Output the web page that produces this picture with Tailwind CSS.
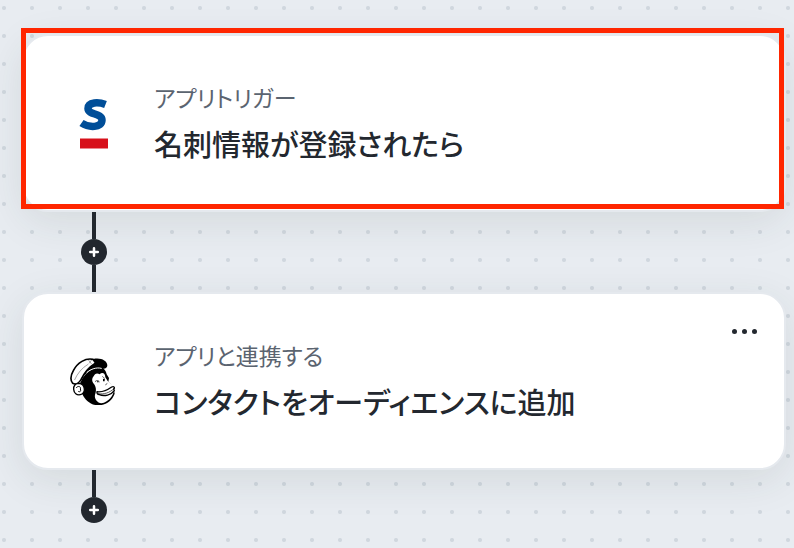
<!DOCTYPE html>
<html lang="ja">
<head>
<meta charset="utf-8">
<meta name="viewport" content="width=device-width, initial-scale=1">
<title>ワークフロー</title>
<script src="https://cdn.jsdelivr.net/npm/@tailwindcss/browser@4"></script>
</head>
<body class="min-h-screen bg-[#e8ecf1] bg-[radial-gradient(circle_at_4px_8px,#d0d7de_1.5px,transparent_2.5px)] bg-[size:28px_28px] font-['Noto_Sans_CJK_JP',sans-serif] [font-feature-settings:'palt']">
<main class="flex flex-col pt-[34px] pl-[22px] pr-2">

  <section class="relative flex h-[178px] items-center gap-9 rounded-[26px] border-2 border-[#e5e9ee] bg-white pl-[46px] shadow-[0_10px_40px_rgba(40,60,50,0.10)]">
    <svg class="size-12 shrink-0 overflow-visible" viewBox="0 0 48 48" role="img" aria-label="Sansan">
      <path fill="none" stroke="#004e98" stroke-width="7.5" d="M35.500 5.500C29 3 18 2.500 18 9.500C18 16 32 14 32 21C32 29 19 29 11.500 24"/>
      <path fill="#d7101a" d="M10 39.500h28v10H10z"/>
    </svg>
    <div class="pb-1">
      <p class="text-[23px] leading-9 text-[#5b6470]">アプリトリガー</p>
      <h2 class="mt-2 text-[29px] leading-10 font-medium text-[#23282f]">名刺情報が登録されたら</h2>
    </div>
    <div class="pointer-events-none absolute -top-2 right-0 bottom-px -left-[3px] border-5 border-[#ff2600]"></div>
  </section>

  <div class="ml-[58px] flex h-20 w-7 flex-col items-center">
    <span class="w-1 flex-1 bg-[#23282f]"></span>
    <button type="button" aria-label="ステップを追加" class="flex size-[26px] items-center justify-center rounded-full bg-[#23282f]">
      <svg class="size-[26px]" viewBox="0 0 26 26" stroke="#fff" stroke-width="2.500" stroke-linecap="round"><path d="M13 9.200v7.600M9.200 13h7.600"/></svg>
    </button>
    <span class="w-1 flex-1 bg-[#23282f]"></span>
  </div>

  <section class="relative flex h-[178px] items-center gap-9 rounded-[26px] border-2 border-[#e5e9ee] bg-white pl-[46px] shadow-[0_10px_40px_rgba(40,60,50,0.10)]">
    <svg class="size-12 shrink-0" viewBox="30 36 144 144" role="img" aria-label="Mailchimp" stroke-linecap="round" stroke-linejoin="round">
      <path fill="#000" d="M62 112C70 92 84 78 112 64C128 65 138 76 140 88L147 99L145 110L160 125L164 146C155 170 135 181 114 181C91 180 75 165 67 147L55 145L53 120Z"/>
      <path fill="#fff" stroke="#000" stroke-width="5" d="M38 115C31 106 32 91 40 77C52 53 77 38 99 43L107 54C91 64 76 77 63 104C57 114 47 120 38 115Z"/>
      <path fill="#000" d="M100 42C121 37 141 46 142 61C142 72 130 74 118 68C99 68 82 77 74 91C74 77 90 62 106 56Z"/>
      <path fill="none" stroke="#777" stroke-width="2" d="M44 104C52 86 66 68 84 58M86 46l8 10M94 46l-6 8"/>
      <path fill="none" stroke="#fff" stroke-width="3" d="M81 82C93 72 109 66 124 70"/>
      <path fill="#fff" d="M101 94C104 85 112 83 119 88C126 81 136 84 136 97L143 108L153 117C161 121 163 127 161 135C162 151 145 172 124 175C113 174 102 161 105 149C110 138 108 124 102 117C95 110 95 100 101 94Z"/>
      <path fill="#fff" stroke="#000" stroke-width="4" d="M57 115C46 115 40 122 41 133C42 145 50 151 61 149C69 148 74 140 73 132C72 122 67 116 57 115Z"/>
      <path fill="none" stroke="#000" stroke-width="3" d="M49 128C55 120 64 126 61 132C64 138 60 142 56 140"/>
      <path fill="#fff" stroke="#000" stroke-width="4" d="M111 140C126 142 141 136 155 126C162 123 166 128 161 132L163 137C154 150 133 155 118 149C112 148 110 144 111 140Z"/>
      <path fill="none" stroke="#000" stroke-width="2" d="M115 146C133 149 148 143 161 132M106 109C110 105 115 106 118 110M128 95C132 97 133 99 133 103M137 119l4-3"/>
      <path fill="#000" d="M129 102h5v7h-5zM111 109h5v3h-5z"/>
    </svg>
    <div class="pb-1">
      <p class="text-[23px] leading-9 text-[#5b6470]">アプリと連携する</p>
      <h2 class="mt-2 text-[29px] leading-10 font-medium text-[#23282f]">コンタクトをオーディエンスに追加</h2>
    </div>
    <button type="button" aria-label="メニュー" class="absolute top-[23px] right-6 flex h-7 w-8 items-center justify-center gap-[5px]">
      <span class="size-[5px] rounded-full bg-[#23282f]"></span>
      <span class="size-[5px] rounded-full bg-[#23282f]"></span>
      <span class="size-[5px] rounded-full bg-[#23282f]"></span>
    </button>
  </section>

  <div class="ml-[58px] flex w-7 flex-col items-center">
    <span class="h-[27px] w-1 bg-[#23282f]"></span>
    <button type="button" aria-label="ステップを追加" class="flex size-[26px] items-center justify-center rounded-full bg-[#23282f]">
      <svg class="size-[26px]" viewBox="0 0 26 26" stroke="#fff" stroke-width="2.500" stroke-linecap="round"><path d="M13 9.200v7.600M9.200 13h7.600"/></svg>
    </button>
  </div>
</main>
</body>
</html>
